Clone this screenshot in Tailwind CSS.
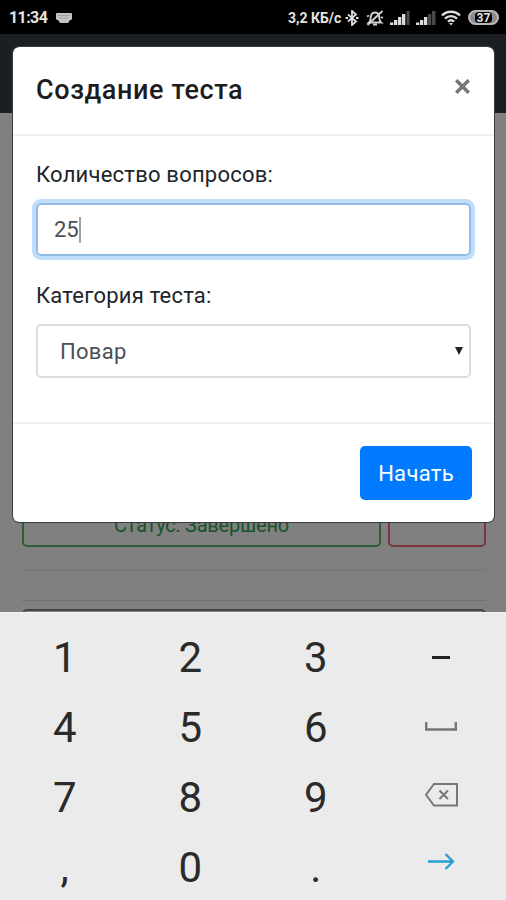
<!DOCTYPE html>
<html lang="ru">
<head>
    <meta charset="UTF-8">
    <meta name="viewport" content="width=device-width, initial-scale=1.0">
    <title>Создание теста</title>
    <script src="https://cdn.jsdelivr.net/npm/@tailwindcss/browser@4"></script>
</head>
<body class="bg-[#808080] font-[Roboto,sans-serif]">
<div class="flex flex-col w-[506px] h-[900px] overflow-hidden">

    <!-- Status bar -->
    <div class="flex items-center justify-between h-[34px] shrink-0 bg-black pl-[9px] pr-[7px] pt-[1px] text-[#e4e4e4]">
        <div class="flex items-center gap-[9px]">
            <span class="text-[16px] font-bold leading-none tracking-[-0.6px] w-[38px] whitespace-nowrap">11:34</span>
            <svg class="w-[16px] h-[10px]" viewBox="0 0 16 10">
                <path d="M1 0h14a1 1 0 0 1 1 1v4.500a1.500 1.500 0 0 1-1.500 1.500H14l-2 3H4L2 7h-.5A1.500 1.500 0 0 1 0 5.500V1a1 1 0 0 1 1-1z" fill="#c4c4c4"/>
                <path d="M2 2.500h12M3 5h10" stroke="#8a8a8a" stroke-width="1" stroke-dasharray="1.500 1"/>
            </svg>
        </div>
        <div class="flex items-center">
            <span class="text-[14px] font-bold leading-none w-[57px] whitespace-nowrap">3,2 КБ/с</span>
            <svg class="w-[14px] h-[16px]" viewBox="0 0 14 16" fill="none" stroke="#dedede" stroke-width="1.800">
                <path d="M3 4.500l8 7-4 3.500V1l4 3.500-8 7"/>
                <path d="M0.500 8h2.500M11 8h2.500" stroke-width="2"/>
            </svg>
            <svg class="w-[18px] h-[16px] ml-[7px]" viewBox="0 0 18 16" fill="none" stroke="#d2d2d2" stroke-width="1.900">
                <path d="M3 12.500c2-1.500 1.500-4 1.800-6C5.300 3.500 7 2.500 9 2.500s3.700 1 4.200 4c.3 2-.2 4.500 1.800 6z"/>
                <path d="M7 14.500h4M1.500 15L16.500 1M1 6.500l2-1M17 8l-2-1"/>
            </svg>
            <svg class="w-[20px] h-[14px] ml-[6px]" viewBox="0 0 20 14" fill="#dcdcdc">
                <rect x="0" y="11.500" width="3.300" height="2.500"/>
                <rect x="4" y="9" width="3.300" height="5"/>
                <rect x="8" y="6" width="3.300" height="8"/>
                <rect x="12" y="3" width="3.300" height="11"/>
                <rect x="16.500" y="0" width="3" height="14" fill="#4a4a4a"/>
            </svg>
            <svg class="w-[20px] h-[14px] ml-[6px]" viewBox="0 0 20 14" fill="#dcdcdc">
                <rect x="0" y="11.500" width="3.300" height="2.500"/>
                <rect x="4" y="9" width="3.300" height="5"/>
                <rect x="8" y="6" width="3.300" height="8"/>
                <rect x="12" y="3" width="3.300" height="11" fill="#4a4a4a"/>
                <rect x="16" y="0" width="3.500" height="14" fill="#4a4a4a"/>
            </svg>
            <svg class="w-[20px] h-[16px] ml-[5px]" viewBox="0 0 20 16" fill="none" stroke="#dedede" stroke-width="2.400">
                <path d="M1 5.500c5-5 13-5 18 0M4 8.700c3.500-3.400 8.500-3.400 12 0M7 11.700c2-1.800 4-1.800 6 0"/>
                <path d="M8 13h4l-2 2.500z" fill="#dedede" stroke="none"/>
            </svg>
            <div class="flex items-center justify-center w-[31px] h-[15px] ml-[7px] rounded-full border-2 border-[#b9b9b9] bg-[#8d8d8d]">
                <span class="flex items-center justify-center w-[17px] h-[11px] rounded-sm bg-black text-[12px] font-bold leading-none">37</span>
            </div>
        </div>
    </div>

    <!-- Page under the backdrop -->
    <div class="relative h-[578px] shrink-0 overflow-hidden">
        <div class="h-[79px] bg-[#1b1f22]"></div>
        <div class="flex flex-col pl-[22px] pr-[20px] pt-[380px]">
            <div class="flex gap-[7px]">
                <div class="flex items-center justify-center w-[359px] h-[54px] rounded-[5px] border-2 border-[#2c5e37] text-[#17522a]">
                    <span class="text-[20px] tracking-[-0.2px] pt-[9px] whitespace-nowrap">Статус: Завершено</span>
                </div>
                <div class="w-[98px] h-[54px] rounded-[5px] border-2 border-[#7e343c]"></div>
            </div>
            <div class="mt-[22px] ml-[2px] h-[2px] bg-[#7a7a7a]"></div>
            <div class="mt-[29px] h-px bg-[#717171]"></div>
            <div class="mt-[8px] h-[20px] rounded-t-[5px] border-2 border-[#454545]"></div>
        </div>

        <!-- Modal -->
        <div class="absolute left-[12px] top-[12px] w-[483px] h-[477px] flex flex-col rounded-[7px] border border-[#3c3c3c] bg-white bg-clip-padding text-[#212529]">
            <div class="flex justify-between h-[89px] shrink-0 border-b-2 border-[#f0f0f0] pl-[23px] pr-[24px]">
                <h5 id="modal-title" class="pt-[25px] text-[27px] leading-[36px] font-medium whitespace-nowrap text-[#1c1c1c]"><span class="tracking-[0.6px]">Создание теста</span></h5>
                <button type="button" aria-label="Закрыть" class="self-start mt-[32px]">
                    <svg class="w-[15px] h-[15px]" viewBox="0 0 15 15" stroke="#777777" stroke-width="3.600">
                        <path d="M1.200 1.200l12.600 12.600M13.800 1.200L1.200 13.800"/>
                    </svg>
                </button>
            </div>
            <div class="flex flex-col h-[288px] shrink-0 px-[23px] border-b-2 border-[#f2f2f2]">
                <label class="mt-[22px] text-[22px] leading-[34px] whitespace-nowrap"><span class="tracking-[0.22px]">Количество вопросов:</span></label>
                <div class="flex items-center mt-[11px] w-[435px] h-[53px] rounded-[5px] border-2 border-[#92bbe3] ring-[4px] ring-[#bfdefc] pl-[16px] text-[#495057]">
                    <span class="text-[22px]">25</span>
                    <span class="w-[2px] h-[26px] bg-[#a0a0a0]"></span>
                </div>
                <label class="mt-[23px] text-[22px] leading-[34px] whitespace-nowrap"><span class="tracking-[0.22px]">Категория теста:</span></label>
                <div class="flex items-center justify-between mt-[11px] w-[435px] h-[54px] rounded-[5px] border-2 border-[#dadcde] pl-[22px] pr-[6px] text-[#495057]">
                    <span class="text-[22px] tracking-[0.3px]">Повар</span>
                    <svg class="w-[8px] h-[8px]" viewBox="0 0 8 8"><path d="M0 0h8L4 8z" fill="#222222"/></svg>
                </div>
            </div>
            <div class="flex justify-end px-[22px] pt-[22px]">
                <button type="button" class="w-[112px] h-[54px] rounded-[5px] bg-[#007bff] text-white text-[22px] tracking-[0.3px]">Начать</button>
            </div>
        </div>
    </div>

    <!-- Numeric keyboard -->
    <div class="grid grid-cols-4 auto-rows-[70px] h-[288px] shrink-0 place-items-center border-t border-[#f4f4f4] bg-[#ebebeb] px-[2px] pt-[10px] text-[42px] leading-none text-[#2a2a2a]">
        <span>1</span>
        <span>2</span>
        <span>3</span>
        <svg class="w-[18px] h-[3px] mb-[2px]" viewBox="0 0 18 3"><rect width="18" height="3" fill="#222222"/></svg>
        <span>4</span>
        <span>5</span>
        <span>6</span>
        <svg class="w-[32px] h-[9px] mb-[3px]" viewBox="0 0 32 9" fill="none" stroke="#777777" stroke-width="2.400"><path d="M1.200 0v7.500h29.600V0"/></svg>
        <span>7</span>
        <span>8</span>
        <span>9</span>
        <svg class="w-[33px] h-[24px] mb-[6px]" viewBox="0 0 33 24" fill="none" stroke="#777777" stroke-width="2">
            <path d="M9 1h23v21.500H9L1 11.750z"/>
            <path d="M14.500 7.500l8.500 8.500M23 7.500L14.500 16"/>
        </svg>
        <span>,</span>
        <span>0</span>
        <span>.</span>
        <svg class="w-[27px] h-[17px] mb-[14px]" viewBox="0 0 27 17" fill="none" stroke="#2a9fd6" stroke-width="2.400"><path d="M0 8.500h25M17.500 1l7.500 7.500-7.500 7.500"/></svg>
    </div>

</div>
</body>
</html>
